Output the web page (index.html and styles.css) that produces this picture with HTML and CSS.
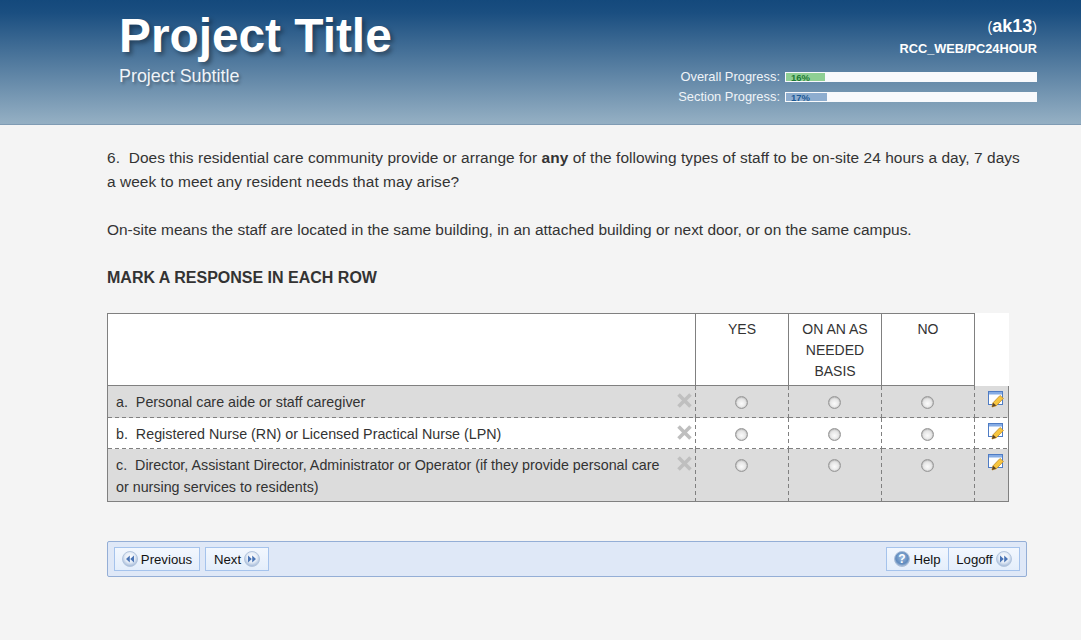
FILE: index.html
```html
<!DOCTYPE html>
<html lang="en">
<head>
  <meta charset="UTF-8">
  <title>Project Title</title>
  <link rel="stylesheet" href="styles.css">
</head>
<body>

<svg class="icon-defs" width="0" height="0">
  <defs>
    <radialGradient id="ball" cx="50%" cy="40%" r="60%">
      <stop offset="0" stop-color="#ffffff"/>
      <stop offset="0.55" stop-color="#e6edf7"/>
      <stop offset="1" stop-color="#9fb6d6"/>
    </radialGradient>
    <radialGradient id="ballhelp" cx="50%" cy="40%" r="60%">
      <stop offset="0" stop-color="#9dbbdf"/>
      <stop offset="0.7" stop-color="#5f8abd"/>
      <stop offset="1" stop-color="#b3c6de"/>
    </radialGradient>
    <symbol id="btn-ball" viewBox="0 0 16 16">
      <circle cx="8" cy="8" r="7.5" fill="url(#ball)" stroke="#b4c6de"/>
    </symbol>
    <symbol id="note" viewBox="0 0 17 17">
      <rect x="0.5" y="0.5" width="14" height="13" fill="#fdfeff" stroke="#4f7cc4"/>
      <rect x="1" y="1" width="13" height="2.5" fill="#86ace4"/>
      <path d="M4 16l1-4.2 7-7.3 3.4 2.9-7 7.3z" fill="#f7c63f" stroke="#c08a2a" stroke-width="0.8"/>
      <path d="M4 16l1-4.2 3.3 2.8z" fill="#5e4524"/>
    </symbol>
    <symbol id="cross" viewBox="0 0 15 15">
      <path d="M2.8 2.8l9.4 9.4M12.2 2.8l-9.4 9.4" stroke="#bfbfbf" stroke-width="3.6" stroke-linecap="square"/>
    </symbol>
  </defs>
</svg>

<header class="top">
  <div class="brand">
    <h1>Project Title</h1>
    <p>Project Subtitle</p>
  </div>
  <div class="status">
    <div class="user">(<b>ak13</b>)</div>
    <div class="path">RCC_WEB/PC24HOUR</div>
    <div class="prog-row">
      <span class="prog-label">Overall Progress:</span>
      <div class="prog-track">
        <div class="prog-fill fill-green" style="width: 41px"></div>
        <span class="prog-num num-green">16%</span>
      </div>
    </div>
    <div class="prog-row">
      <span class="prog-label">Section Progress:</span>
      <div class="prog-track">
        <div class="prog-fill fill-blue" style="width: 43px"></div>
        <span class="prog-num num-blue">17%</span>
      </div>
    </div>
  </div>
</header>

<main class="content">
  <p class="question lead">6.&nbsp; Does this residential care community provide or arrange for <b>any</b> of the following types of staff to be on-site 24 hours a day, 7 days a week to meet any resident needs that may arise?</p>
  <p class="question">On-site means the staff are located in the same building, in an attached building or next door, or on the same campus.</p>
  <p class="instruct">MARK A RESPONSE IN EACH ROW</p>

  <table class="grid">
    <tr class="head">
      <th class="col-q"></th>
      <th class="col-a">YES</th>
      <th class="col-a">ON AN AS NEEDED BASIS</th>
      <th class="col-a">NO</th>
      <th class="col-n"></th>
    </tr>
    <tr class="shade row-a">
      <td class="cell-q"><div class="q-wrap"><span>a.&nbsp; Personal care aide or staff caregiver</span><svg class="cross"><use href="#cross"/></svg></div></td>
      <td class="cell-a"><input type="radio" name="a"></td>
      <td class="cell-a"><input type="radio" name="a"></td>
      <td class="cell-a"><input type="radio" name="a"></td>
      <td class="cell-n"><svg class="note"><use href="#note"/></svg></td>
    </tr>
    <tr class="row-b">
      <td class="cell-q"><div class="q-wrap"><span>b.&nbsp; Registered Nurse (RN) or Licensed Practical Nurse (LPN)</span><svg class="cross"><use href="#cross"/></svg></div></td>
      <td class="cell-a"><input type="radio" name="b"></td>
      <td class="cell-a"><input type="radio" name="b"></td>
      <td class="cell-a"><input type="radio" name="b"></td>
      <td class="cell-n"><svg class="note"><use href="#note"/></svg></td>
    </tr>
    <tr class="shade row-c">
      <td class="cell-q"><div class="q-wrap"><span>c.&nbsp; Director, Assistant Director, Administrator or Operator (if they provide personal care or nursing services to residents)</span><svg class="cross"><use href="#cross"/></svg></div></td>
      <td class="cell-a"><input type="radio" name="c"></td>
      <td class="cell-a"><input type="radio" name="c"></td>
      <td class="cell-a"><input type="radio" name="c"></td>
      <td class="cell-n"><svg class="note"><use href="#note"/></svg></td>
    </tr>
  </table>

  <nav class="nav-bar">
    <div class="nav-group">
      <a class="btn btn-prev"><span class="circ">
        <svg viewBox="0 0 16 16"><use href="#btn-ball"/><path d="M7.8 4.5v7L4 8zM12 4.5v7L8.2 8z" fill="#4a74b5"/></svg>
      </span>Previous</a>
      <a class="btn btn-next">Next<span class="circ">
        <svg viewBox="0 0 16 16"><use href="#btn-ball"/><path d="M4 4.5v7L7.8 8zM8.2 4.5v7L12 8z" fill="#4a74b5"/></svg>
      </span></a>
    </div>
    <div class="nav-group joined">
      <a class="btn btn-help"><span class="circ">
        <svg viewBox="0 0 16 16"><circle cx="8" cy="8" r="7.5" fill="url(#ballhelp)" stroke="#a9bdd8"/><text x="8" y="12" class="help-q">?</text></svg>
      </span>Help</a>
      <a class="btn btn-logoff">Logoff<span class="circ">
        <svg viewBox="0 0 16 16"><use href="#btn-ball"/><path d="M4 4.5v7L7.8 8zM8.2 4.5v7L12 8z" fill="#4a74b5"/></svg>
      </span></a>
    </div>
  </nav>
</main>

</body>
</html>
```

FILE: styles.css
```css
* {
  margin: 0;
  padding: 0;
  box-sizing: border-box;
}

html, body {
  height: 100%;
  background: #f4f4f4;
  color: #333;
  font-family: "Liberation Sans", Arial, sans-serif;
  overflow: hidden;
}

.icon-defs {
  display: block;
  height: 0;
}

.top {
  height: 125px;
  background: linear-gradient(to bottom, #14497c 0%, #1a4e80 10%, #94afc3 99%);
  border-bottom: 1px solid #7f9bb3;
  padding: 0 44px 0 119px;
  display: flex;
  justify-content: space-between;
}

.brand h1 {
  color: #fff;
  font-size: 47.8px;
  line-height: 55px;
  margin-top: 8px;
  font-weight: bold;
  text-shadow: 3px 3px 4px rgba(0, 0, 0, 0.35);
}

.brand p {
  color: #f0f4f8;
  font-size: 17.9px;
  line-height: 20px;
  margin-top: 3px;
  text-shadow: 2px 2px 3px rgba(0, 0, 0, 0.3);
}

.status {
  color: #fff;
  text-align: right;
  padding-top: 16px;
}

.user {
  font-size: 14px;
  line-height: 20px;
}

.user b {
  font-size: 18px;
}

.path {
  font-size: 12.75px;
  font-weight: bold;
  line-height: 16px;
  margin-top: 4px;
  margin-bottom: 10px;
}

.prog-row {
  display: flex;
  justify-content: flex-end;
  align-items: center;
  height: 20px;
}

.prog-label {
  font-size: 12.9px;
  color: #f0f4f8;
  margin: -2px 5px 0 0;
}

.prog-track {
  position: relative;
  width: 252px;
  height: 10px;
  background: #f8f9fc;
}

.prog-fill {
  height: 100%;
}

.fill-green {
  background: #8fcf94;
  border: 1px solid #f8f9fc;
}

.fill-blue {
  background: #8eadcf;
  border: 1px solid #f8f9fc;
}

.prog-num {
  position: absolute;
  left: 6px;
  top: 0;
  font-size: 9.5px;
  line-height: 11px;
  font-weight: bold;
}

.num-green {
  color: #1d7a35;
}

.num-blue {
  color: #1d5a96;
}

.content {
  width: 920px;
  margin-left: 107px;
  padding-top: 21px;
}

.question {
  font-size: 15.45px;
  line-height: 24px;
  margin-bottom: 24px;
}

.lead {
  width: 916px;
  letter-spacing: 0.06px;
}

.instruct {
  font-size: 16px;
  font-weight: bold;
  line-height: 24px;
  margin-bottom: 23px;
}

.grid {
  width: 901px;
  border-collapse: collapse;
  table-layout: fixed;
  font-size: 14px;
  background: #fff;
}

.col-q {
  width: 588px;
}

.col-a {
  width: 93px;
}

.col-n {
  width: 34px;
}

.head th {
  height: 72px;
  font-weight: normal;
  line-height: 21px;
  vertical-align: top;
  padding: 5px 10px 0;
  border: 1px solid #808080;
}

.head .col-n {
  border: none;
  border-left: 1px solid #808080;
}

/* 4 on 3 off, the browser's own dashed border comes out too short */
.grid td {
  vertical-align: top;
  background-image:
    repeating-linear-gradient(to bottom, #808080 0 4px, transparent 4px 7px),
    repeating-linear-gradient(to right, #808080 0 4px, transparent 4px 7px);
  background-size: 1px 100%, 100% 1px;
  background-position: right top, left bottom;
  background-repeat: no-repeat;
}

.grid td:last-child {
  background-size: 0 0, 100% 1px;
  border-right: 1px solid #808080;
}

.grid td:first-child {
  border-left: 1px solid #808080;
}

.row-a td {
  height: 32px;
}

.row-b td {
  height: 31px;
}

.row-c td {
  height: 53px;
  border-bottom: 1px solid #808080;
  background-size: 1px 100%, 0 0;
}

.row-c td:last-child {
  background-image: none;
}

.shade td {
  background-color: #dcdcdc;
}

.cell-q {
  padding: 5px 4px 0 8px;
  font-size: 14.3px;
  line-height: 22px;
}

.q-wrap {
  display: flex;
  justify-content: space-between;
  align-items: flex-start;
}

.q-wrap span {
  width: 550px;
}

.cross {
  width: 15px;
  height: 15px;
  margin: 2px 0 0 0;
  flex: none;
}

.cell-a {
  text-align: center;
  padding-top: 10px;
}

.cell-a input {
  appearance: none;
  display: inline-block;
  width: 13px;
  height: 13px;
  border-radius: 50%;
  border: 1px solid #999;
  background: radial-gradient(circle at 50% 60%, #fbfbfb 0%, #e6e6e6 50%, #b5b5b5 100%);
  box-shadow: inset 0 0 1px #777;
  vertical-align: top;
  margin-left: -2px;
}

.cell-n {
  padding: 5px 0 0 13px;
}

.note {
  display: block;
  width: 17px;
  height: 17px;
}

.nav-bar {
  margin-top: 39px;
  height: 36px;
  background: #dfe8f7;
  border: 1px solid #94aed6;
  border-radius: 2px;
  padding: 5px 6px;
  display: flex;
  justify-content: space-between;
}

.nav-group {
  display: flex;
  gap: 5px;
}

.nav-group.joined {
  gap: 0;
}

.joined .btn + .btn {
  border-left: none;
}

.btn {
  display: flex;
  align-items: center;
  justify-content: center;
  height: 24px;
  gap: 3px;
  font-size: 13.2px;
  color: #111;
  background: linear-gradient(to bottom, #f2f7fe, #e4eefb);
  border: 1px solid #a5c3ec;
  cursor: pointer;
}

.btn-prev {
  width: 86px;
}

.btn-next {
  width: 64px;
}

.btn-help {
  width: 63px;
}

.btn-logoff {
  width: 71px;
}

.circ {
  display: block;
  width: 16px;
  height: 16px;
}

.circ svg {
  display: block;
  width: 16px;
  height: 16px;
}

.help-q {
  font-size: 12px;
  font-weight: bold;
  fill: #fff;
  text-anchor: middle;
}
```
